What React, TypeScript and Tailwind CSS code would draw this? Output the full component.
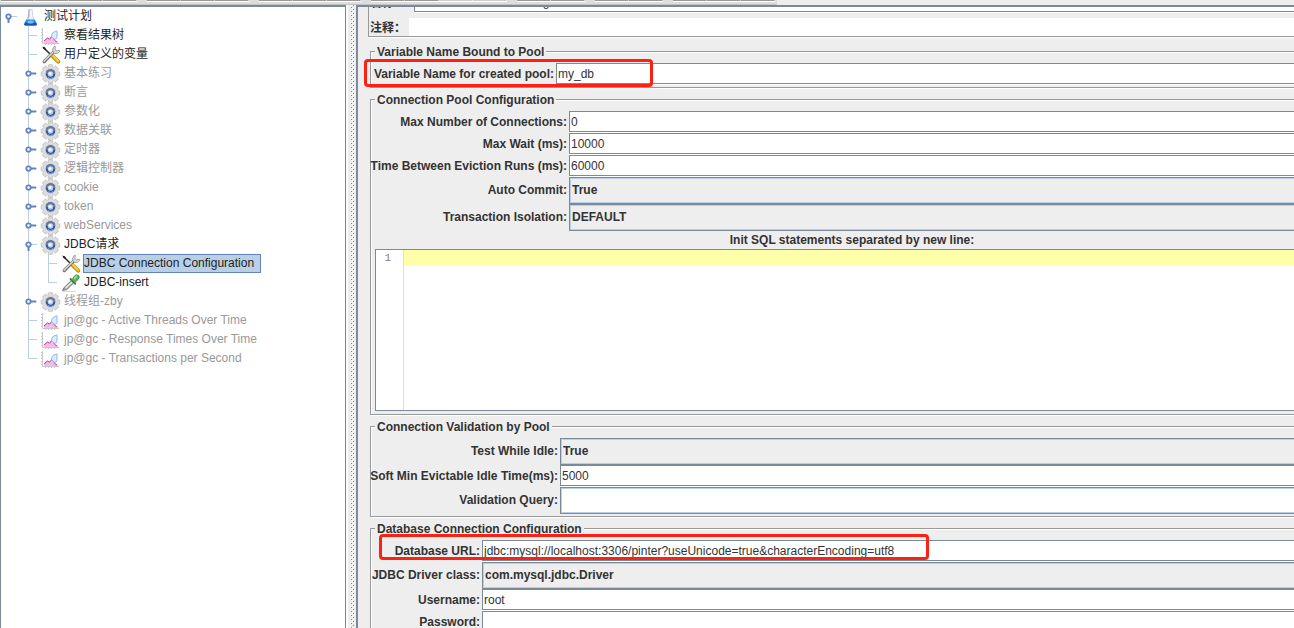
import type { ReactNode } from "react";

type IconName = "flask" | "chart" | "tools" | "gear" | "pipette";
type Guide = "none" | "line" | "tee" | "corner";
type Handle = "open" | "closed";

interface TreeItem {
  label: string;
  icon: IconName;
  guides: Guide[];
  handle?: Handle;
  disabled?: boolean;
  selected?: boolean;
}

const tree: TreeItem[] = [
  { label: "测试计划", icon: "flask", guides: ["none"], handle: "open" },
  { label: "察看结果树", icon: "chart", guides: ["none", "tee"] },
  { label: "用户定义的变量", icon: "tools", guides: ["none", "tee"] },
  { label: "基本练习", icon: "gear", guides: ["none", "tee"], handle: "closed", disabled: true },
  { label: "断言", icon: "gear", guides: ["none", "tee"], handle: "closed", disabled: true },
  { label: "参数化", icon: "gear", guides: ["none", "tee"], handle: "closed", disabled: true },
  { label: "数据关联", icon: "gear", guides: ["none", "tee"], handle: "closed", disabled: true },
  { label: "定时器", icon: "gear", guides: ["none", "tee"], handle: "closed", disabled: true },
  { label: "逻辑控制器", icon: "gear", guides: ["none", "tee"], handle: "closed", disabled: true },
  { label: "cookie", icon: "gear", guides: ["none", "tee"], handle: "closed", disabled: true },
  { label: "token", icon: "gear", guides: ["none", "tee"], handle: "closed", disabled: true },
  { label: "webServices", icon: "gear", guides: ["none", "tee"], handle: "closed", disabled: true },
  { label: "JDBC请求", icon: "gear", guides: ["none", "tee"], handle: "open" },
  { label: "JDBC Connection Configuration", icon: "tools", guides: ["none", "line", "tee"], selected: true },
  { label: "JDBC-insert", icon: "pipette", guides: ["none", "line", "corner"] },
  { label: "线程组-zby", icon: "gear", guides: ["none", "tee"], handle: "closed", disabled: true },
  { label: "jp@gc - Active Threads Over Time", icon: "chart", guides: ["none", "tee"], disabled: true },
  { label: "jp@gc - Response Times Over Time", icon: "chart", guides: ["none", "tee"], disabled: true },
  { label: "jp@gc - Transactions per Second", icon: "chart", guides: ["none", "corner"], disabled: true },
];

// true = enabled button, false = greyed out
const toolbar: boolean[][] = [
  [true, true, true, true],
  [true, true, true],
  [true, true, true],
  [true, true, false, false],
  [true, true],
  [true, true],
  [true, true, true],
];

const teeth = [0, 45, 90, 135, 180, 225, 270, 315];

function TreeIcon({ name }: { name: IconName }) {
  return (
    <svg width="20" height="19" viewBox="0 0 20 19" className="shrink-0 overflow-visible" aria-hidden="true">
      {name === "flask" && (
        <>
          <path d="M7.500 2.500h4l-.3 1 .6 6 3.700 7.500q.2 1.500-1.200 1.500H4.700q-1.400 0-1.200-1.500l3.700-7.500.6-6z" fill="#e9ecf6" stroke="#c3c8d8" strokeWidth=".7" />
          <path d="M7.500 3h1.200l-.4 7-1.800 3z" fill="#aab2c8" />
          <path d="M5.300 12.500h8.400l2 4.200q.2 1.800-1.300 1.800H4.600q-1.500 0-1.300-1.800z" fill="#3b8ee6" />
          <path d="M4 15.500h11l.8 1.700q0 1.300-1.400 1.300H4.600q-1.400 0-1.300-1.300z" fill="#1459b8" />
          <ellipse cx="9.500" cy="15" rx="3" ry="1.600" fill="#7cc0f8" />
          <path d="M10 3.500v6.500l-1 2" fill="none" stroke="#fff" />
        </>
      )}
      {name === "chart" && (
        <>
          <path d="M1.500 2v15.500H18" fill="none" stroke="#c6c6cf" />
          <path d="M0 3.500h1M0 6.500h1M0 9.500h1M0 12.500h1M0 15.500h1M4.500 18v1M7.500 18v1M10.500 18v1M13.500 18v1" stroke="#c9c9d2" />
          <path d="M3 17v-2.500l3.500-3 2 1.500 2.500-3 3.500 5 2.500 1v1z" fill="#f5b9ec" />
          <path d="M3 15l3.500-3 2 1.200 2.500-3 3 4.500 2 1.300" fill="none" stroke="#b5447e" />
          <path d="M10.500 10.500q0-3.500 2.500-4.500l3-1.200v7q-1 1.700-2.500 1.500z" fill="#dcebfd" stroke="#93b8ef" />
        </>
      )}
      {name === "tools" && (
        <>
          <path d="M3 3l8.500 8.500" stroke="#2b2b2b" strokeWidth="1.500" />
          <path d="M1.500 1.500l2.700 1 .8 2.700L2.200 3.700z" fill="#1b1b1b" />
          <path d="M3.200 16.500L13.500 6.200" stroke="#6b6b6b" strokeWidth="3.200" strokeLinecap="round" />
          <path d="M3 16.200L13.200 6" stroke="#dcdcdc" strokeWidth="1.600" strokeLinecap="round" />
          <path d="M12 7q-1.200-3 .8-5.200l1.500-.6-.3 3.300 1.500 1.300 3-.5.1 1.200q-1.600 2.600-4.800 2z" fill="#d9d9d9" stroke="#8a8a8a" strokeWidth=".7" />
          <path d="M11.800 11.300l5.500 5.400" stroke="#a8820a" strokeWidth="3.800" strokeLinecap="round" />
          <path d="M12 11.200l5.200 5.200" stroke="#f2c41c" strokeWidth="2.600" strokeLinecap="round" />
          <path d="M12.500 11l4.500 4.400" stroke="#fbe27a" strokeWidth=".8" strokeLinecap="round" />
        </>
      )}
      {name === "gear" && (
        <g transform="translate(9.500 10)">
          {teeth.map((a) => (
            <rect key={a} x="-2.300" y="-9.300" width="4.600" height="5" rx="1" transform={`rotate(${a})`} fill="#dcdcdc" stroke="#b2b2b2" strokeWidth=".7" />
          ))}
          <circle r="7.300" fill="#e0e0e0" />
          <circle r="5.600" fill="#ececec" stroke="#c2c2c2" strokeWidth=".6" />
          <circle r="4.800" fill="#2f5597" />
          <path d="M-4.800 0a4.800 4.800 0 0 1 9.600 0z" fill="#66799c" />
          <circle r="2.700" fill="#b9cdec" />
          <circle cx="-.4" cy="-.4" r="1.500" fill="#f4f8ff" />
          <path d="M-3 3.200A4.400 4.400 0 0 0 3 3.200" fill="none" stroke="#6f9fe2" />
        </g>
      )}
      {name === "pipette" && (
        <>
          <path d="M2 18.500h13" stroke="#d8d8d8" />
          <path d="M1.500 17.500l1.800-3.200 7.200-6.800 2.300 2.300-7 6.700z" fill="#a9b3aa" stroke="#5a625b" strokeWidth=".8" />
          <path d="M4.500 15l6.500-6" stroke="#eef3ee" strokeWidth="1.200" />
          <path d="M9.500 6l4.800 4.800" stroke="#3a7a3a" strokeWidth="1.800" strokeLinecap="round" />
          <path d="M11 6.500L13.500 3q2-2.300 4-.6 1.800 1.800-.3 4L14 9.500z" fill="#5cb356" stroke="#3f843d" strokeWidth=".7" />
          <path d="M13.500 5.500l2-2.200" stroke="#b9e6b4" strokeWidth="1.300" strokeLinecap="round" />
        </>
      )}
    </svg>
  );
}

function GuideCell({ guide, handle }: { guide: Guide; handle?: Handle }) {
  return (
    <svg width="20" height="19" viewBox="0 0 20 19" className="shrink-0" aria-hidden="true">
      <g stroke="#b8cfe5" fill="none">
        {(guide === "line" || guide === "tee") && <path d="M7.500 0v19" />}
        {guide === "corner" && <path d="M7.500 0v9.500" />}
        {(guide === "tee" || guide === "corner" || handle) && <path d="M7 9.500h9" />}
      </g>
      {handle && (
        <g stroke="#6382bf" fill="#fff">
          <path d={handle === "open" ? "M7.500 11v5" : "M9 9.500h6"} strokeWidth="2" />
          <circle cx="7.500" cy="9.500" r="2.200" strokeWidth="1.800" />
        </g>
      )}
    </svg>
  );
}

function TreeRow({ item }: { item: TreeItem }) {
  const last = item.guides.length - 1;
  return (
    <li className="flex h-[19px] items-center" role="treeitem" aria-selected={!!item.selected}>
      {item.guides.map((g, i) => (
        <GuideCell key={i} guide={g} handle={i === last ? item.handle : undefined} />
      ))}
      <TreeIcon name={item.icon} />
      <span
        className={
          "ml-0.5 h-[19px] border pr-1.5 leading-[17px] whitespace-nowrap " +
          (item.selected ? "border-[#6382bf] bg-[#b8cfe5] " : "border-transparent ") +
          (item.disabled ? "text-[#999999]" : "text-[#222222]")
        }
      >
        {item.label}
      </span>
    </li>
  );
}

function Group({ title, children }: { title: string; children: ReactNode }) {
  return (
    <fieldset className="mb-1 ml-0.5 border border-[#999999] px-1 pt-1 pb-0.5 shadow-[1px_1px_0_#ffffff,inset_1px_1px_0_#ffffff]">
      <legend className="h-[15px] bg-[#eeeeee] px-0.5 leading-4 font-bold">{title}</legend>
      {children}
    </fieldset>
  );
}

interface FieldProps {
  id: string;
  label: string;
  value: string;
  labelWidth: string;
  type?: string;
  mark?: string;
}

function TextField({ id, label, value, labelWidth, type = "text", mark }: FieldProps) {
  return (
    <div className="relative flex h-[22px] items-start">
      <label htmlFor={id} className={`${labelWidth} flex shrink-0 justify-end pr-0.5 leading-[22px] font-bold whitespace-nowrap`}>
        {label}
      </label>
      <input
        id={id}
        type={type}
        defaultValue={value}
        className="h-[21px] min-w-0 flex-1 border border-[#7a8a99] bg-white px-px shadow-[0_1px_0_#ffffff] outline-none"
      />
      {mark && <span className={`pointer-events-none absolute z-10 rounded-sm border-3 border-[#fe2012] ${mark}`} />}
    </div>
  );
}

function SelectField({ id, label, value, labelWidth }: FieldProps) {
  return (
    <div className="flex h-[27px]">
      <label htmlFor={id} className={`${labelWidth} flex shrink-0 justify-end pr-0.5 leading-[26px] font-bold whitespace-nowrap`}>
        {label}
      </label>
      <select
        id={id}
        defaultValue={value}
        className="min-w-0 flex-1 appearance-none border border-[#7a8a99] bg-[#eeeeee] px-0.5 pb-0.5 font-bold shadow-[inset_1px_1px_0_#b8cfe5,inset_-1px_-1px_0_#b8cfe5] outline-none"
      >
        <option>{value}</option>
      </select>
    </div>
  );
}

export default function App() {
  return (
    <div className="flex h-screen flex-col overflow-hidden bg-[#eeeeee] font-['Liberation_Sans','Noto_Sans_CJK_SC',sans-serif] text-xs text-[#333333]">
      <div className="flex h-[5px] shrink-0 items-start gap-2.5 self-start border-b border-[#c4c4c4] bg-[#dddddd] pr-0.5 pl-px">
        {toolbar.map((group, i) => (
          <div key={i} className="flex">
            {group.map((enabled, j) => (
              <div
                key={j}
                className={"h-0.5 w-[34px] border-t border-r border-b border-r-white border-b-white " + (enabled ? "border-t-[#999999]" : "border-t-[#cccccc]")}
              />
            ))}
          </div>
        ))}
      </div>

      <div className="flex min-h-0 flex-1">
        <nav className="w-[346px] shrink-0 border-x border-t-2 border-[#7a8a99] bg-white">
          <ul role="tree">
            {tree.map((item) => (
              <TreeRow key={item.label} item={item} />
            ))}
          </ul>
        </nav>

        <div className="w-2.5 shrink-0 border-l-2 border-white">
          <svg width="8" height="100%" className="block" aria-hidden="true">
            <defs>
              <pattern id="bumps" width="4" height="4" patternUnits="userSpaceOnUse">
                <path d="M1 0h1v1H1zM3 2h1v1H3z" fill="#7a8a99" />
                <path d="M2 1h1v1H2zM0 3h1v1H0z" fill="#ffffff" />
              </pattern>
            </defs>
            <rect x="2" width="4" height="100%" fill="url(#bumps)" />
          </svg>
        </div>

        <main className="min-w-0 flex-1 overflow-hidden border-t-2 border-l-2 border-[#7a8a99] pl-2.5">
          {/* the form is wider than its viewport and runs off to the right */}
          <div className="-mr-10">
            <div className="mb-[7px] border-b border-l border-[#999999] shadow-[0_1px_0_#ffffff]">
              <div className="flex h-1.5 items-end overflow-hidden">
                <div className="flex h-[22px] flex-1 items-start">
                  <label htmlFor="name" className="w-[45px] shrink-0 pl-px leading-6 font-bold">
                    名称：
                  </label>
                  <input
                    id="name"
                    type="text"
                    defaultValue="JDBC Connection Configuration"
                    className="h-[21px] min-w-0 flex-1 border border-[#7a8a99] bg-white px-px shadow-[0_1px_0_#ffffff] outline-none"
                  />
                </div>
              </div>
              <div className="mt-[5px] flex h-[18px]">
                <label htmlFor="comment" className="w-10 shrink-0 pl-px leading-5 font-bold">
                  注释：
                </label>
                <input id="comment" type="text" className="min-w-0 flex-1 bg-white outline-none" />
              </div>
            </div>

            <Group title="Variable Name Bound to Pool">
              <TextField
                id="pool-var"
                label="Variable Name for created pool:"
                value="my_db"
                labelWidth="w-[181px]"
                mark="-top-1 -left-[11px] h-7 w-[289px]"
              />
            </Group>

            <Group title="Connection Pool Configuration">
              <TextField id="max-conn" label="Max Number of Connections:" value="0" labelWidth="w-[194px]" />
              <TextField id="max-wait" label="Max Wait (ms):" value="10000" labelWidth="w-[194px]" />
              <TextField id="eviction" label="Time Between Eviction Runs (ms):" value="60000" labelWidth="w-[194px]" />
              <SelectField id="auto-commit" label="Auto Commit:" value="True" labelWidth="w-[194px]" />
              <SelectField id="isolation" label="Transaction Isolation:" value="DEFAULT" labelWidth="w-[194px]" />
              <label htmlFor="init-sql" className="block h-[18px] text-center leading-[18px] font-bold">
                Init SQL statements separated by new line:
              </label>
              <div className="mb-px flex h-[162px] border border-[#7a8a99] bg-white">
                <div className="w-7 shrink-0 border-r border-[#dddddd] pr-3 text-right font-['Liberation_Mono',monospace] text-[11px] leading-[17px] text-[#808080]">
                  1
                </div>
                <textarea
                  id="init-sql"
                  className="min-w-0 flex-1 resize-none bg-[linear-gradient(#ffffaa,#ffffaa)] bg-size-[100%_16px] bg-no-repeat leading-4 outline-none"
                />
              </div>
            </Group>

            <Group title="Connection Validation by Pool">
              <SelectField id="test-idle" label="Test While Idle:" value="True" labelWidth="w-[185px]" />
              <TextField id="soft-min" label="Soft Min Evictable Idle Time(ms):" value="5000" labelWidth="w-[185px]" />
              <div className="flex h-[27px]">
                <label htmlFor="validation-query" className="flex w-[185px] shrink-0 justify-end pr-0.5 leading-[26px] font-bold">
                  Validation Query:
                </label>
                <input
                  id="validation-query"
                  type="text"
                  className="min-w-0 flex-1 border border-[#7a8a99] bg-white px-px shadow-[inset_1px_1px_0_#b8cfe5,inset_-1px_-1px_0_#b8cfe5] outline-none"
                />
              </div>
            </Group>

            <Group title="Database Connection Configuration">
              <TextField
                id="db-url"
                label="Database URL:"
                value="jdbc:mysql://localhost:3306/pinter?useUnicode=true&characterEncoding=utf8"
                labelWidth="w-[107px]"
                mark="-top-1.5 left-1 h-[26px] w-[550px]"
              />
              <SelectField id="driver" label="JDBC Driver class:" value="com.mysql.jdbc.Driver" labelWidth="w-[107px]" />
              <TextField id="username" label="Username:" value="root" labelWidth="w-[107px]" />
              <TextField id="password" label="Password:" value="" labelWidth="w-[107px]" type="password" />
            </Group>
          </div>
        </main>
      </div>
    </div>
  );
}
